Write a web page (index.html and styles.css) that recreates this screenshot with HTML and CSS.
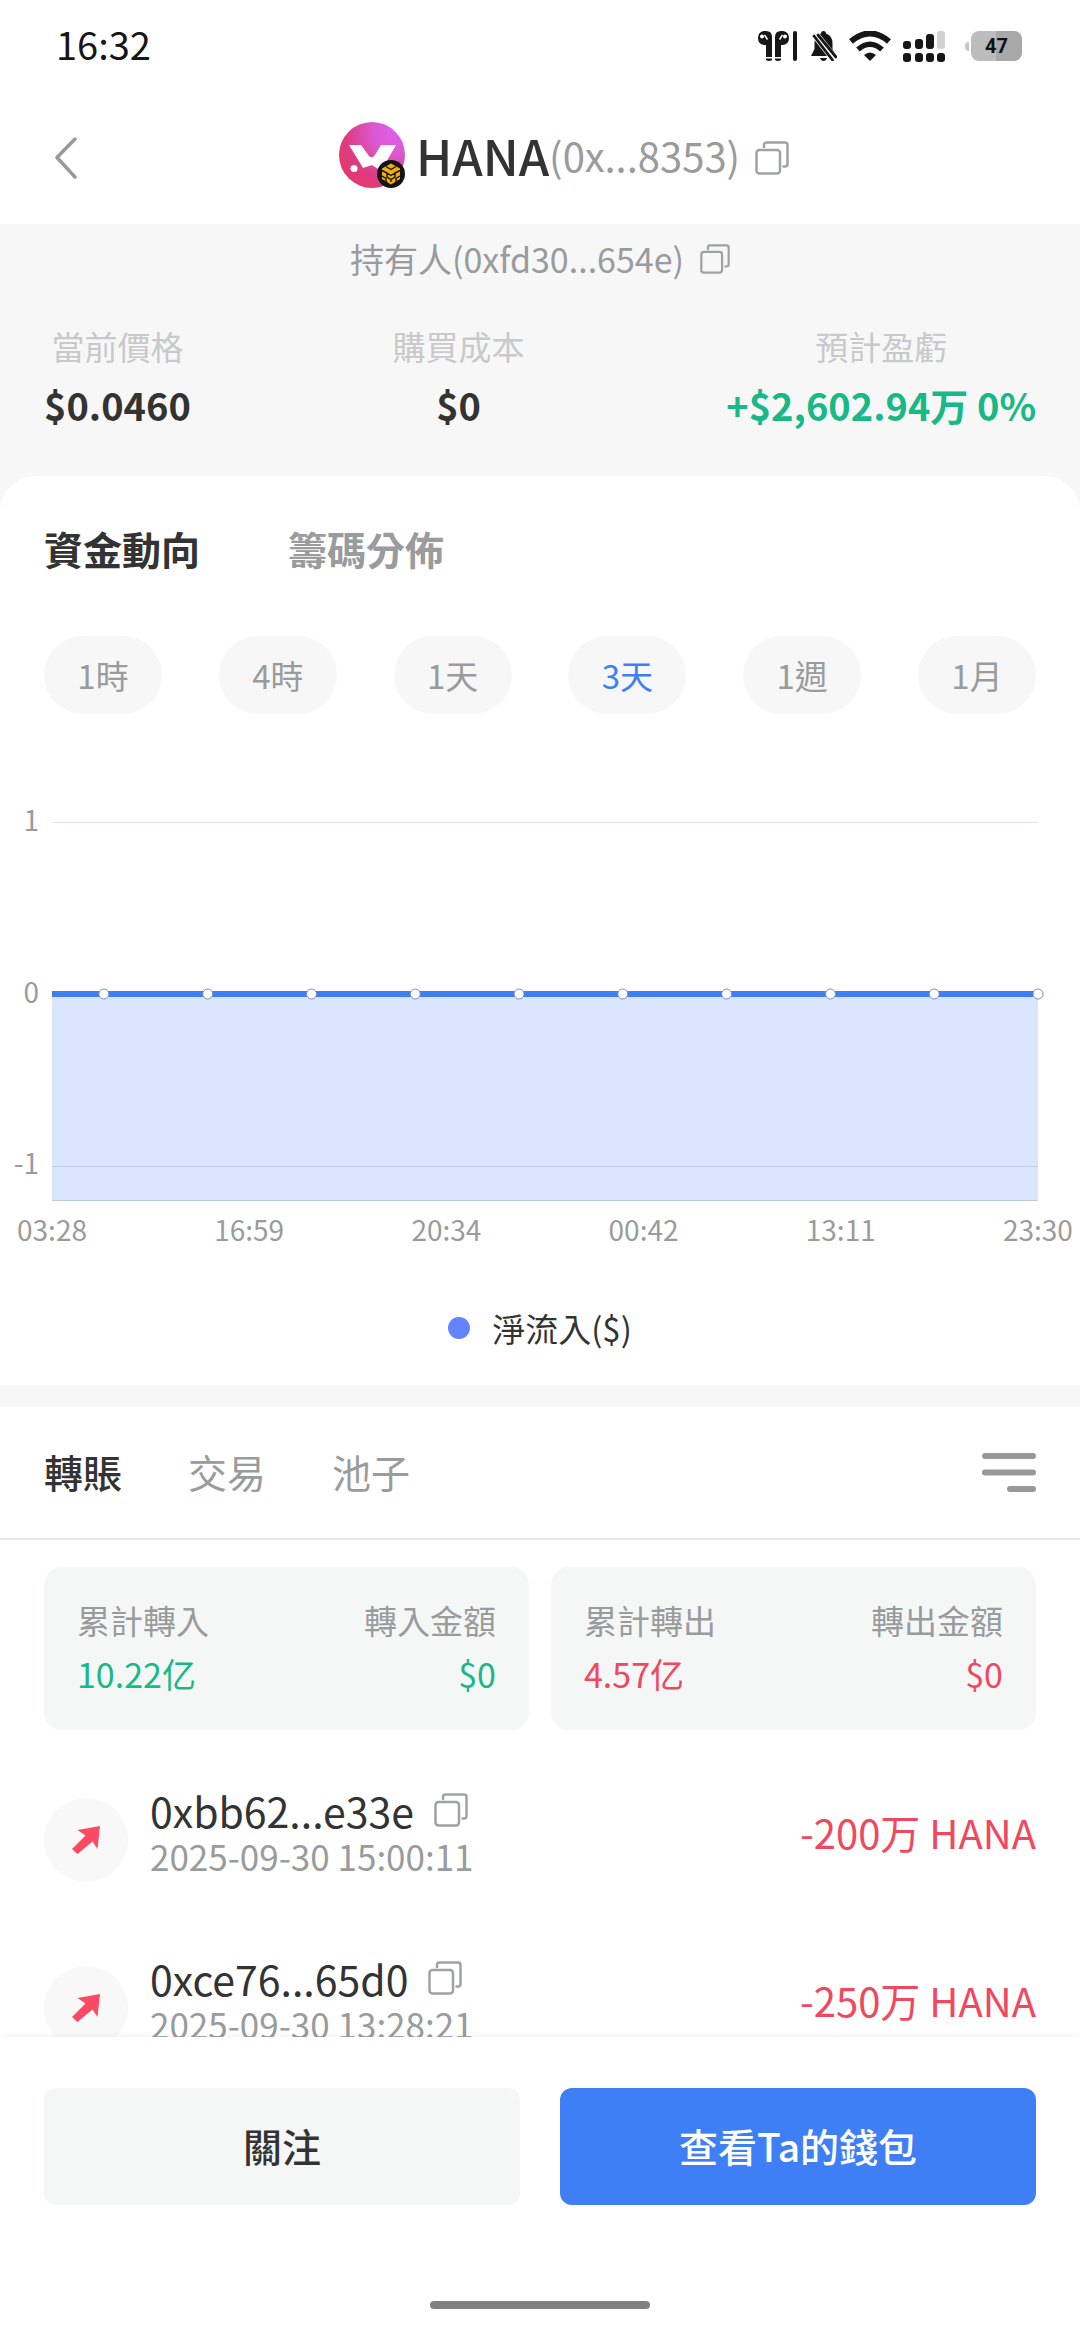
FILE: index.html
```html
<!DOCTYPE html>
<html lang="zh-Hant">
<head>
<meta charset="utf-8">
<meta name="viewport" content="width=device-width, initial-scale=1">
<title>HANA</title>
<link rel="stylesheet" href="styles.css">
</head>
<body>
<svg class="sprite" aria-hidden="true">
  <symbol id="copy" viewBox="0 0 34 34">
    <rect x="1.500" y="9" width="23.500" height="23.500" rx="3" fill="none" stroke="currentColor" stroke-width="2.500"/>
    <path d="M9 6V4Q9 1.500 11.500 1.500H30Q32.500 1.500 32.500 4V23Q32.500 25.500 30 25.500H28.500" fill="none" stroke="currentColor" stroke-width="2.500" stroke-linecap="round"/>
  </symbol>
  <symbol id="out" viewBox="0 0 28 28">
    <path d="M28 0L25.500 23L20.500 15.500L5.500 28L0 23L13.500 9.500L5.500 4Z" fill="#fc4a62"/>
  </symbol>
</svg>

<div class="status">
  <span class="clock">16:32</span>
  <div class="status-icons">
    <svg width="40" height="30" viewBox="0 0 40 30" fill="#161616">
      <path d="M6 0H8Q14 0 14 6V26H8V14H6Q0 13 0 7T6 0Z"/>
      <path d="M25 0H23Q17 0 17 6V26H23V14H25Q31 13 31 7T25 0Z"/>
      <path d="M8 27.500H14V29Q11 31 8 29ZM17 27.500H23V29Q20 31 17 29Z"/>
      <circle cx="4" cy="5.500" r="2" fill="#fff"/><circle cx="27" cy="5.500" r="2" fill="#fff"/>
      <path d="M6.500 4L9.500 8.500M24.500 4L21.500 8.500" stroke="#fff" stroke-width="1.500"/>
      <rect x="35" y="0" width="4" height="30" rx="2"/>
    </svg>
    <svg width="27" height="30" viewBox="0 0 27 30">
      <path d="M11 2.500Q11 0 13.500 0T16 2.500Q22.500 5 22.500 12V18L26 25H1L4.500 18V12Q4.500 5 11 2.500Z" fill="#161616"/>
      <path d="M10 27H17Q16 30 13.500 30T10 27Z" fill="#161616"/>
      <path d="M4 2L26 30" stroke="#fff" stroke-width="8"/>
      <path d="M4 5L22.500 29M8 4L26 26" stroke="#161616" stroke-width="2.800" stroke-linecap="round"/>
    </svg>
    <svg width="42" height="30" viewBox="0 0 42 30">
      <path d="M2 10.500Q21-5.500 40 10.500" fill="none" stroke="#161616" stroke-width="6"/>
      <path d="M9 18.500Q21 8 33 18.500" fill="none" stroke="#161616" stroke-width="5.500"/>
      <path d="M15 24Q21 19 27 24L21 30Z" fill="#161616"/>
    </svg>
    <svg width="42" height="31" viewBox="0 0 42 31" fill="#161616">
      <rect y="10" width="8" height="8" rx="3"/><rect x="12" y="8" width="8" height="10" rx="3"/><rect x="23" y="3" width="8" height="15" rx="3"/><rect x="34" width="8" height="18" rx="3" fill="#d2d2d2"/>
      <rect y="22" width="8" height="9" rx="3"/><rect x="12" y="22" width="8" height="9" rx="3"/><rect x="23" y="22" width="8" height="9" rx="3"/><rect x="34" y="22" width="8" height="9" rx="3"/>
    </svg>
    <span class="battery"><span class="battery-body">47</span></span>
  </div>
</div>

<header class="header">
  <button class="icon-btn back" aria-label="返回">
    <svg width="22" height="42" viewBox="0 0 22 42"><path d="M20 2L2 20.500L20 40" fill="none" stroke="#999" stroke-width="3.500" stroke-linecap="round" stroke-linejoin="round"/></svg>
  </button>
  <h1 class="title">
    <svg class="logo" width="66" height="66" viewBox="0 0 66 66">
      <defs>
        <radialGradient id="lg" cx="0.85" cy="0.15" r="1"><stop offset="0" stop-color="#e160ec"/><stop offset="0.35" stop-color="#da58cd"/><stop offset="0.75" stop-color="#dc3c80"/><stop offset="1" stop-color="#e5386a"/></radialGradient>
      </defs>
      <circle cx="33" cy="33" r="33" fill="url(#lg)"/>
      <path d="M10 23H22L30 34Q33 37 36 33L42 23H57L42 49L33 43L24 46L18 36Z" fill="#fff"/>
      <circle cx="15" cy="46.500" r="3.500" fill="#fff"/>
      <circle cx="52" cy="52" r="14" fill="#141414"/>
      <path d="M52 41.500L61 46.500V57L52 62.500L43 57V46.500Z" fill="#f2ac0c"/>
      <path d="M47 44.500L52 47.500L57 44.500M43 48.500L48 51V55L52 57.500L56 55V51L61 48.500M48 51L52 53.500L56 51M52 57.500V60M43 54L47 56.500V60M61 54L57 56.500V60" fill="none" stroke="#141414" stroke-width="1.400"/>
    </svg>
    <span class="token">HANA</span><span class="address">(0x...8353)</span>
  </h1>
  <button class="icon-btn" aria-label="複製合約地址"><svg width="34" height="34"><use href="#copy"/></svg></button>
</header>

<main class="content">
  <section class="summary">
    <div class="holder">
      <span>持有人(0xfd30...654e)</span>
      <button class="icon-btn" aria-label="複製持有人地址"><svg width="30" height="30"><use href="#copy"/></svg></button>
    </div>
    <dl class="stats">
      <div class="stat"><dt>當前價格</dt><dd>$0.0460</dd></div>
      <div class="stat"><dt>購買成本</dt><dd>$0</dd></div>
      <div class="stat"><dt>預計盈虧</dt><dd class="up">+$2,602.94万 0%</dd></div>
    </dl>
  </section>

  <section class="flow">
    <nav class="flow-tabs">
      <button class="tab active">資金動向</button>
      <button class="tab">籌碼分佈</button>
    </nav>
    <div class="periods">
      <button class="period">1時</button>
      <button class="period">4時</button>
      <button class="period">1天</button>
      <button class="period active">3天</button>
      <button class="period">1週</button>
      <button class="period">1月</button>
    </div>
    <div class="chart">
      <div class="y-axis"><span>1</span><span>0</span><span>-1</span></div>
      <svg class="plot" width="100%" height="413">
        <rect x="0" y="206" width="100%" height="206" fill="#d9e5ff"/>
        <path d="M0 34.500H4000" stroke="#e0e3e7"/>
        <path d="M0 378.500H4000M0 412.500H4000" stroke="#bfcbe2"/>
        <rect x="0" y="203" width="100%" height="6" fill="#3f7ff5"/>
        <g fill="#fff" stroke="#7f8cc0" stroke-width="1">
          <circle cx="5.260%" cy="206" r="5"/><circle cx="15.790%" cy="206" r="5"/><circle cx="26.320%" cy="206" r="5"/><circle cx="36.840%" cy="206" r="5"/><circle cx="47.370%" cy="206" r="5"/><circle cx="57.890%" cy="206" r="5"/><circle cx="68.420%" cy="206" r="5"/><circle cx="78.950%" cy="206" r="5"/><circle cx="89.470%" cy="206" r="5"/><circle cx="100%" cy="206" r="5"/>
        </g>
      </svg>
    </div>
    <div class="x-axis"><span>03:28</span><span>16:59</span><span>20:34</span><span>00:42</span><span>13:11</span><span>23:30</span></div>
    <div class="legend"><span class="dot"></span>淨流入($)</div>
  </section>

  <section class="records">
    <div class="record-bar">
      <nav class="record-tabs">
        <button class="tab active">轉賬</button>
        <button class="tab">交易</button>
        <button class="tab">池子</button>
      </nav>
      <button class="icon-btn" aria-label="篩選">
        <svg width="54" height="39" viewBox="0 0 54 39" stroke="#999" stroke-width="6" stroke-linecap="round"><path d="M3 3H51M3 19.500H51M28 36H51"/></svg>
      </button>
    </div>
    <div class="totals">
      <dl class="total up">
        <div><dt>累計轉入</dt><dd>10.22亿</dd></div>
        <div class="end"><dt>轉入金額</dt><dd>$0</dd></div>
      </dl>
      <dl class="total down">
        <div><dt>累計轉出</dt><dd>4.57亿</dd></div>
        <div class="end"><dt>轉出金額</dt><dd>$0</dd></div>
      </dl>
    </div>
    <ul class="list">
      <li class="row">
        <span class="badge"><svg width="28" height="28"><use href="#out"/></svg></span>
        <div class="info">
          <div class="name">0xbb62...e33e <button class="icon-btn" aria-label="複製地址"><svg width="34" height="34"><use href="#copy"/></svg></button></div>
          <time class="time">2025-09-30 15:00:11</time>
        </div>
        <span class="amount down">-200万 HANA</span>
      </li>
      <li class="row">
        <span class="badge"><svg width="28" height="28"><use href="#out"/></svg></span>
        <div class="info">
          <div class="name">0xce76...65d0 <button class="icon-btn" aria-label="複製地址"><svg width="34" height="34"><use href="#copy"/></svg></button></div>
          <time class="time">2025-09-30 13:28:21</time>
        </div>
        <span class="amount down">-250万 HANA</span>
      </li>
    </ul>
  </section>
</main>

<footer class="footer">
  <div class="actions">
    <button class="action">關注</button>
    <button class="action primary">查看Ta的錢包</button>
  </div>
  <div class="home-bar"></div>
</footer>
</body>
</html>
```
FILE: styles.css
```css
* {
  box-sizing: border-box;
  margin: 0;
  padding: 0;
}

body {
  display: flex;
  flex-direction: column;
  height: 100vh;
  overflow: hidden;
  background: #fff;
  color: #333;
  font-family: "Noto Sans CJK TC", "Noto Sans", sans-serif;
  font-size: 33px;
  line-height: 48px;
}

button {
  border: 0;
  background: none;
  color: inherit;
  font: inherit;
  cursor: pointer;
}

svg {
  display: block;
}

.sprite {
  display: none;
}

.icon-btn {
  display: flex;
  color: #a0a2a2;
}

.up dd,
dd.up {
  color: #19b887;
}

.down dd,
.amount.down {
  color: #f0485f;
}

/* Status bar */
.status {
  display: flex;
  flex: none;
  align-items: center;
  justify-content: space-between;
  height: 92px;
  padding: 0 58px 0 56px;
}

.clock {
  padding-bottom: 4px;
  color: #161616;
  font-size: 38px;
}

.status-icons {
  display: flex;
  align-items: center;
  gap: 12px;
}

.battery {
  display: flex;
  align-items: center;
  gap: 2px;
  margin-left: 8px;
}

.battery::before {
  content: "";
  width: 4px;
  height: 9px;
  border-radius: 4px 0 0 4px;
  background: #c6c6c6;
}

.battery-body {
  width: 51px;
  height: 30px;
  border-radius: 8px;
  background: linear-gradient(90deg, #bcbcbc 50%, #a8a8a8 50%);
  color: #111;
  font-family: Roboto, sans-serif;
  font-size: 20px;
  font-weight: 700;
  line-height: 30px;
  text-align: center;
}

/* Header */
.header {
  display: flex;
  position: relative;
  flex: none;
  align-items: center;
  justify-content: center;
  gap: 15px;
  height: 132px;
  padding-right: 16px;
  padding-left: 64px;
}

.back {
  position: absolute;
  left: 55px;
}

.title {
  display: flex;
  align-items: center;
  padding-bottom: 6px;
  font-weight: 400;
}

.logo {
  margin-right: 11px;
}

.token {
  font-size: 49px;
  font-weight: 500;
}

.address {
  color: #999b9c;
  font-size: 40px;
}

/* Scrolling content */
.content {
  flex: 1;
  min-height: 0;
  overflow: hidden;
  background: #f7f7f7;
}

.summary {
  padding: 11px 44px 43px;
}

.holder {
  display: flex;
  align-items: center;
  justify-content: center;
  gap: 16px;
  color: #999b9c;
  font-size: 34px;
}

.stats {
  display: flex;
  justify-content: space-between;
  margin-top: 39px;
}

.stat {
  text-align: center;
}

.stat dt {
  color: #c8c9ca;
}

.stat dd {
  margin-top: 7px;
  font-size: 38px;
  font-weight: 700;
  line-height: 56px;
}

/* Capital flow */
.flow {
  padding: 44px 0 33px;
  border-radius: 36px 36px 0 0;
  background: #fff;
}

.tab {
  color: #999b9c;
  font-size: 39px;
  line-height: 56px;
}

.tab.active {
  color: #333;
  font-weight: 500;
}

.flow-tabs {
  display: flex;
  gap: 88px;
  padding: 0 44px;
}

.flow-tabs .tab {
  font-weight: 700;
}

.periods {
  display: flex;
  justify-content: space-between;
  margin-top: 60px;
  padding: 0 44px;
}

.period {
  width: 118px;
  height: 78px;
  border-radius: 39px;
  background: #f7f7f7;
  color: #999b9c;
}

.period.active {
  color: #3f7ff5;
}

.chart {
  display: flex;
  margin: 74px 42px 0 0;
}

.y-axis {
  display: flex;
  flex: none;
  flex-direction: column;
  justify-content: space-between;
  width: 52px;
  padding: 11px 13px 19px 0;
  color: #999b9c;
  font-size: 28px;
  line-height: 40px;
  text-align: right;
}

.plot {
  flex: 1;
  min-width: 0;
  overflow: visible;
}

.plot path {
  clip-path: view-box;
}

.x-axis {
  display: flex;
  justify-content: space-between;
  margin: 8px 2px 0 12px;
  color: #999b9c;
  font-size: 28px;
  line-height: 40px;
}

.x-axis span {
  width: 80px;
  text-align: center;
}

.legend {
  display: flex;
  align-items: center;
  justify-content: center;
  gap: 22px;
  margin-top: 55px;
}

.dot {
  width: 22px;
  height: 22px;
  border-radius: 50%;
  background: #6483ff;
}

/* Records */
.records {
  margin-top: 22px;
  background: #fff;
}

.record-bar {
  display: flex;
  align-items: center;
  justify-content: space-between;
  height: 133px;
  padding: 0 44px;
  border-bottom: 2px solid #e6e7e8;
}

.record-tabs {
  display: flex;
  gap: 66px;
  padding-bottom: 4px;
}

.totals {
  display: grid;
  grid-template-columns: 1fr 1fr;
  gap: 22px;
  padding: 27px 44px 0;
}

.total {
  display: flex;
  justify-content: space-between;
  padding: 29px 33px 32px;
  border-radius: 18px;
  background: #f5f7f7;
}

.total dt {
  color: #999b9c;
}

.total dd {
  margin-top: 6px;
  font-size: 34px;
}

.end {
  text-align: right;
}

.list {
  margin-top: 18px;
  list-style: none;
}

.row {
  display: flex;
  align-items: center;
  padding: 34px 44px;
}

.badge {
  display: flex;
  align-items: center;
  justify-content: center;
  width: 84px;
  height: 84px;
  margin-top: 16px;
  margin-right: 22px;
  border-radius: 50%;
  background: #f8f8f8;
}

.info {
  flex: 1;
  padding-bottom: 4px;
}

.name {
  display: flex;
  align-items: center;
  gap: 20px;
  font-size: 41px;
  line-height: 52px;
}

.time {
  display: block;
  color: #999b9c;
  font-size: 35px;
  line-height: 40px;
}

.amount {
  font-size: 40px;
}

/* Footer */
.footer {
  position: relative;
  flex: none;
  padding: 51px 44px 31px;
  background: #fff;
  box-shadow: 0 -1px 6px rgba(0, 0, 0, 0.06);
}

.actions {
  display: grid;
  grid-template-columns: 1fr 1fr;
  gap: 40px;
}

.action {
  height: 117px;
  padding-bottom: 4px;
  border-radius: 12px;
  background: #f5f7f7;
  font-size: 39px;
  font-weight: 500;
}

.action.primary {
  background: #3f7ff5;
  color: #fff;
}

.home-bar {
  width: 220px;
  height: 8px;
  margin: 96px auto 0;
  border-radius: 4px;
  background: #808080;
}
```
